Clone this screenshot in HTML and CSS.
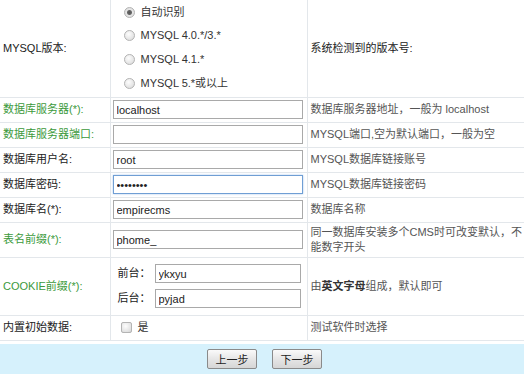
FILE: index.html
```html
<!DOCTYPE html>
<html lang="zh-CN">
<head>
  <meta charset="UTF-8">
  <title>帝国CMS安装 - 配置数据库</title>
  <link rel="stylesheet" href="styles.css">
</head>
<body>

  <form class="setup-form">
    <table class="setup">
      <colgroup>
        <col class="c-label">
        <col class="c-field">
        <col class="c-note">
      </colgroup>
      <tr class="row-version">
        <td class="label">MYSQL版本:</td>
        <td class="field">
          <label class="opt"><input type="radio" name="mysqlver" value="auto" checked><span>自动识别</span></label>
          <label class="opt"><input type="radio" name="mysqlver" value="4.0"><span>MYSQL 4.0.*/3.*</span></label>
          <label class="opt"><input type="radio" name="mysqlver" value="4.1"><span>MYSQL 4.1.*</span></label>
          <label class="opt"><input type="radio" name="mysqlver" value="5.0"><span>MYSQL 5.*或以上</span></label>
        </td>
        <td class="note dark">系统检测到的版本号:</td>
      </tr>
      <tr>
        <td class="label req">数据库服务器(*):</td>
        <td class="field"><input type="text" class="txt" value="localhost"></td>
        <td class="note">数据库服务器地址，一般为 localhost</td>
      </tr>
      <tr>
        <td class="label req">数据库服务器端口:</td>
        <td class="field"><input type="text" class="txt" value=""></td>
        <td class="note">MYSQL端口,空为默认端口，一般为空</td>
      </tr>
      <tr>
        <td class="label">数据库用户名:</td>
        <td class="field"><input type="text" class="txt" value="root"></td>
        <td class="note">MYSQL数据库链接账号</td>
      </tr>
      <tr>
        <td class="label">数据库密码:</td>
        <td class="field"><input type="password" class="txt focus" value="12345678"></td>
        <td class="note">MYSQL数据库链接密码</td>
      </tr>
      <tr>
        <td class="label">数据库名(*):</td>
        <td class="field"><input type="text" class="txt" value="empirecms"></td>
        <td class="note">数据库名称</td>
      </tr>
      <tr class="row-prefix">
        <td class="label req">表名前缀(*):</td>
        <td class="field"><input type="text" class="txt" value="phome_"></td>
        <td class="note">同一数据库安装多个CMS时可改变默认，不能数字开头</td>
      </tr>
      <tr class="row-cookie">
        <td class="label req">COOKIE前缀(*):</td>
        <td class="field">
          <div class="pair"><span>前台：</span><input type="text" class="txt short" value="ykxyu"></div>
          <div class="pair"><span>后台：</span><input type="text" class="txt short" value="pyjad"></div>
        </td>
        <td class="note">由<b>英文字母</b>组成，默认即可</td>
      </tr>
      <tr>
        <td class="label">内置初始数据:</td>
        <td class="field"><label class="opt inline"><input type="checkbox" name="testdata"><span>是</span></label></td>
        <td class="note">测试软件时选择</td>
      </tr>
    </table>

    <div class="actions">
      <button type="button">上一步</button>
      <button type="button">下一步</button>
    </div>
  </form>

</body>
</html>
```

FILE: styles.css
```css
body {
  margin: 0;
  background: #fff;
  font-family: "Liberation Sans", "Noto Sans CJK SC", sans-serif;
  font-size: 11px;
  color: #222;
}

.setup {
  width: 524px;
  border-collapse: collapse;
  table-layout: fixed;
}

.c-label { width: 110px; }
.c-field { width: 197px; }
.c-note  { width: 217px; }

.setup td {
  border-bottom: 1px solid #e3e7eb;
  padding: 0 3px;
  vertical-align: middle;
  line-height: 15px;
}

.setup td.label,
.setup td.field {
  border-right: 1px solid #e3e7eb;
}

.setup td.field {
  padding-left: 2px;
}

.setup td.note {
  padding-right: 0;
}

.setup tr { height: 25px; }
.setup tr.row-version { height: 97px; }
.setup tr.row-prefix { height: 35px; }
.setup tr.row-cookie { height: 58px; }

.label { color: #222; }
.label.req { color: #3c9a3c; }

.note { color: #555; }
.note.dark { color: #222; }
.note b { color: #333; }

/* radio list */
.opt {
  display: flex;
  align-items: center;
  height: 24px;
  padding-left: 11px;
  color: #333;
}

.opt:first-child { height: 22px; }

.opt span { margin-left: 6px; }

.opt.inline {
  padding-left: 8px;
  height: 20px;
}

.opt input {
  -webkit-appearance: none;
  appearance: none;
  margin: 0;
  width: 11px;
  height: 11px;
  border: 1px solid #b4b4b4;
  background: radial-gradient(circle at 40% 35%, #fdfdfd 0%, #e2e2e2 70%, #d0d0d0 100%);
}

.opt input[type="radio"] { border-radius: 50%; }

.opt input[type="radio"]:checked {
  background: radial-gradient(circle, #555 0, #666 2px, #e6e6e6 3px, #d8d8d8 100%);
}

.opt input[type="checkbox"] { border-radius: 2px; }

/* text fields */
.txt {
  box-sizing: border-box;
  width: 190px;
  height: 19px;
  margin: 0;
  padding: 0 3px;
  border: 1px solid #a9a9a9;
  font-family: "Liberation Sans", "Noto Sans CJK SC", sans-serif;
  font-size: 11px;
  color: #222;
  background: #fff;
  vertical-align: middle;
}

.txt.focus {
  border-color: #6f9ed4;
  box-shadow: 0 0 2px #a8c8ec;
  outline: none;
}

.txt.short { width: 146px; }

.pair {
  display: flex;
  align-items: center;
  height: 25px;
  padding-left: 5px;
}

.pair span {
  width: 37px;
  color: #222;
}

/* bottom bar */
.actions {
  margin-top: 3px;
  height: 31px;
  background: #d6f1fc;
  display: flex;
  justify-content: center;
  align-items: flex-start;
  gap: 15px;
  padding-top: 5px;
  padding-left: 5px;
  box-sizing: border-box;
}

.actions button {
  width: 50px;
  height: 20px;
  padding: 0;
  border: 1px solid #8a8a8a;
  border-radius: 2px;
  background: linear-gradient(#fafafa, #e4e4e4 55%, #d6d6d6);
  font-family: "Noto Sans CJK SC", sans-serif;
  font-size: 11px;
  color: #222;
  cursor: pointer;
}
```
